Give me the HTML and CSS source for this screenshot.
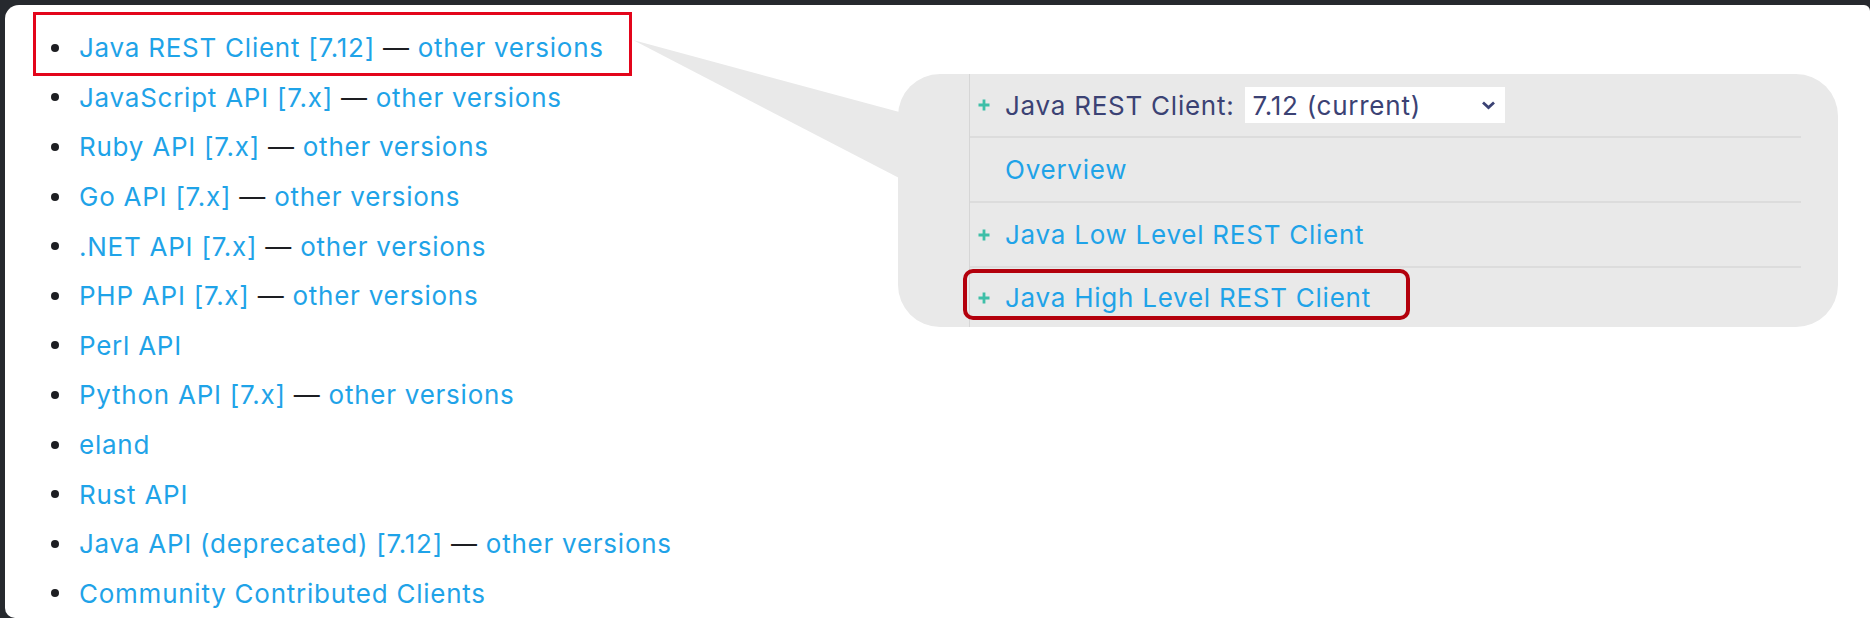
FILE: index.html
```html
<!DOCTYPE html>
<html lang="en">
<head>
<meta charset="utf-8">
<title>Elasticsearch clients</title>
<link rel="stylesheet" href="styles.css">
</head>
<body>
<div class="page">
  <svg class="pointer" width="280" height="150" viewBox="0 0 280 150" aria-hidden="true">
    <polygon points="0,0 270,73 270,140" fill="#e9e9e9"/>
  </svg>
  <div class="content">
    <ul class="clients">
      <li class="hl"><span class="dot"></span><span class="txt"><a>Java REST Client [7.12]</a> — <a>other versions</a></span></li>
      <li><span class="dot"></span><span class="txt"><a>JavaScript API [7.x]</a> — <a>other versions</a></span></li>
      <li><span class="dot"></span><span class="txt"><a>Ruby API [7.x]</a> — <a>other versions</a></span></li>
      <li><span class="dot"></span><span class="txt"><a>Go API [7.x]</a> — <a>other versions</a></span></li>
      <li><span class="dot"></span><span class="txt"><a>.NET API [7.x]</a> — <a>other versions</a></span></li>
      <li><span class="dot"></span><span class="txt"><a>PHP API [7.x]</a> — <a>other versions</a></span></li>
      <li><span class="dot"></span><span class="txt"><a>Perl API</a></span></li>
      <li><span class="dot"></span><span class="txt"><a>Python API [7.x]</a> — <a>other versions</a></span></li>
      <li><span class="dot"></span><span class="txt"><a>eland</a></span></li>
      <li><span class="dot"></span><span class="txt"><a>Rust API</a></span></li>
      <li><span class="dot"></span><span class="txt"><a>Java API (deprecated) [7.12]</a> — <a>other versions</a></span></li>
      <li><span class="dot"></span><span class="txt"><a>Community Contributed Clients</a></span></li>
    </ul>
    <div class="callout">
      <div class="nav">
        <div class="row first">
          <span class="plus"><svg width="12" height="12" viewBox="0 0 12 12"><path d="M6 0.5v11M0.5 6h11" stroke="#3ebfa8" stroke-width="2.8"/></svg></span>
          <span class="label">Java REST Client:</span>
          <span class="select"><span class="val">7.12 (current)</span><svg class="chev" width="15" height="10" viewBox="0 0 15 10"><path d="M2 2.5l5.5 5 5.5-5" fill="none" stroke="#3b4274" stroke-width="2.8"/></svg></span>
        </div>
        <div class="row"><span class="plus"></span><a>Overview</a></div>
        <div class="row"><span class="plus"><svg width="12" height="12" viewBox="0 0 12 12"><path d="M6 0.5v11M0.5 6h11" stroke="#3ebfa8" stroke-width="2.8"/></svg></span><a>Java Low Level REST Client</a></div>
        <div class="row last hl2"><span class="plus"><svg width="12" height="12" viewBox="0 0 12 12"><path d="M6 0.5v11M0.5 6h11" stroke="#3ebfa8" stroke-width="2.8"/></svg></span><a>Java High Level REST Client</a></div>
      </div>
    </div>
  </div>
</div>
</body>
</html>
```
FILE: styles.css
```css
html, body {
  margin: 0;
  padding: 0;
}
body {
  background: #26292e;
  width: 1870px;
  height: 618px;
  overflow: hidden;
  font-family: Inter, "Noto Sans", sans-serif;
}
.page {
  position: relative;
  margin: 5px 0 0 5px;
  height: 613px;
  background: #ffffff;
  border-radius: 14px 6px 0 10px;
}
.pointer {
  position: absolute;
  left: 628px;
  top: 35px;
}
.content {
  display: flex;
  align-items: flex-start;
}
.clients {
  list-style: none;
  margin: 0;
  padding: 18px 0 0 46px;
  width: 847px;
  flex: 0 0 auto;
}
.clients li {
  display: flex;
  align-items: center;
  height: 49.6px;
  font-size: 26px;
  letter-spacing: 0.75px;
  color: #1d1e22;
  position: relative;
}
.dot {
  width: 8px;
  height: 8px;
  border-radius: 50%;
  background: #1d1e22;
  margin-right: 20px;
  flex: 0 0 auto;
}
a {
  color: #1fa3e8;
  text-decoration: none;
}
.clients li.hl::after {
  content: "";
  position: absolute;
  left: -18px;
  top: -11px;
  width: 599px;
  height: 64px;
  border: 3px solid #e3051b;
  box-sizing: border-box;
}
.callout {
  position: relative;
  margin-top: 69px;
  width: 940px;
  height: 253px;
  background: #e9e9e9;
  border-radius: 42px;
  box-sizing: border-box;
  padding-left: 71px;
}
.nav {
  width: 831px;
  height: 100%;
  border-left: 1px solid #d6d6d6;
}
.row {
  position: relative;
  display: flex;
  align-items: center;
  height: 63px;
  border-bottom: 2px solid #dcdcdc;
  padding-left: 8px;
  font-size: 26px;
  letter-spacing: 0.75px;
}
.row.first {
  height: 62px;
}
.row.last {
  height: 59px;
  border-bottom: none;
}
.plus {
  width: 27px;
  flex: 0 0 auto;
  display: flex;
  align-items: center;
}
.label {
  color: #3b4274;
}
.select {
  display: flex;
  align-items: center;
  justify-content: space-between;
  margin-left: 11px;
  width: 260px;
  height: 36px;
  box-sizing: border-box;
  padding: 0 9px 0 7px;
  background: #ffffff;
  color: #3b4274;
}
.hl2::after {
  content: "";
  position: absolute;
  left: -7px;
  top: 1px;
  width: 447px;
  height: 51px;
  border: 4px solid #b3000c;
  border-radius: 10px;
  box-sizing: border-box;
}
```
